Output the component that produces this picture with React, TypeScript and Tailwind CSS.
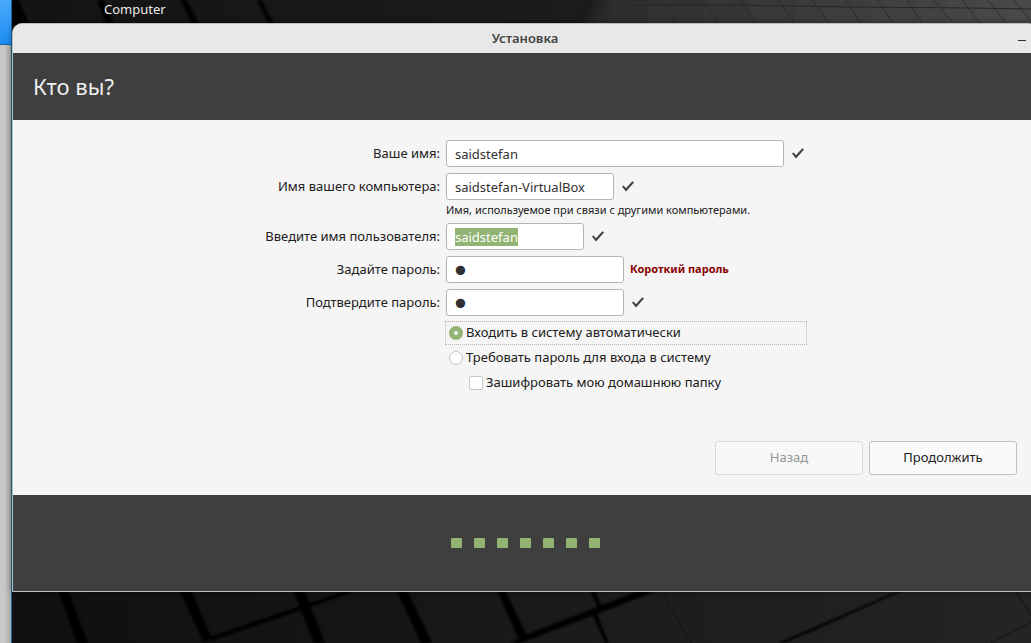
import { useEffect, useRef } from "react";
import type { ReactNode } from "react";

const STEPS = [1, 2, 3, 4, 5, 6, 7];

const BOX =
  "h-[27px] min-w-0 rounded-[3px] border border-[#b4b4b4] bg-white text-[#303030] outline-none selection:bg-[#92b372] selection:text-white";
const INPUT = `${BOX} px-2 text-[13px] leading-4`;
const PASSWORD = `${BOX} px-1 pt-0.5 font-['DejaVu_Sans',sans-serif] text-[32px] leading-6`;
const RADIO =
  "size-3.5 appearance-none rounded-full border border-[#c8c8c8] bg-white outline-none checked:border-[5px] checked:border-[#92b372]";

function Check() {
  return (
    <svg width="14" height="12" viewBox="0 0 14 12" className="shrink-0" role="img" aria-label="OK">
      <path d="M1 5.6 L2.6 4.4 L4.9 7.3 L11.4 0.2 L13 1.5 L5 10.5 Z" fill="#404040" />
    </svg>
  );
}

function Wallpaper() {
  return (
    <svg
      className="absolute inset-0 h-full w-full"
      viewBox="0 0 1031 643"
      preserveAspectRatio="xMidYMid slice"
      aria-hidden="true"
    >
      <defs>
        <linearGradient id="base" x1="0" y1="0" x2="1" y2="0">
          <stop offset="0" stopColor="#101010" />
          <stop offset="0.35" stopColor="#151515" />
          <stop offset="0.6" stopColor="#1c1c1c" />
          <stop offset="1" stopColor="#242424" />
        </linearGradient>
        <linearGradient id="upper" x1="0" y1="0" x2="1" y2="0">
          <stop offset="0" stopColor="#131313" />
          <stop offset="0.5" stopColor="#1b1b1b" />
          <stop offset="1" stopColor="#1f1f1f" />
        </linearGradient>
        <linearGradient id="glow" x1="0" y1="0" x2="1" y2="0">
          <stop offset="0" stopColor="#2a2a2a" />
          <stop offset="0.25" stopColor="#333333" />
          <stop offset="1" stopColor="#4b4b4b" />
        </linearGradient>
        <filter id="soft" x="-5%" y="-5%" width="110%" height="110%">
          <feGaussianBlur stdDeviation="0.8" />
        </filter>
        <filter id="haze" x="-5%" y="-100%" width="110%" height="300%">
          <feGaussianBlur stdDeviation="7" />
        </filter>
      </defs>
      <rect width="1031" height="643" fill="url(#base)" />
      <rect width="1031" height="40" fill="url(#upper)" />
      <polygon points="575,60 592,20 618,-30 1060,-30 1060,60" fill="url(#glow)" filter="url(#haze)" />
      <g fill="#060606" filter="url(#soft)">
        <polygon points="12,0 19,0 30,26 12,26" />
        <polygon points="97,0 104,0 115,26 107,26" />
        <polygon points="180,0 187,0 200,26 193,26" />
        <polygon points="257,0 261,0 275,26 270,26" />
        <polygon points="58,590 68,590 88,643 77,643" />
        <polygon points="179,590 191,590 211,637 204,643" />
        <polygon points="293,590 304,590 325,643 314,643" />
        <polygon points="396,590 407,590 432,643 421,643" />
        <polygon points="497,590 505,590 527,636 518,638" />
        <polygon points="590,590 594,590 602,606 598,608" />
        <polygon points="592,614 596,612 609,643 605,643" />
        <polygon points="206,641 212,636 306,604 345,591 356,591 308,608 214,640" />
        <polygon points="510,643 528,634 638,591 656,591 592,616 520,643" />
        <polygon points="778,643 815,627 900,590 904,590 815,630 784,643" />
      </g>
      <g stroke="#262626" strokeWidth="1" fill="none">
        <path d="M625 5 L730 5 L850 7 L970 8 L1031 9" />
        <path
          opacity="0.7"
          d="M662 0 L676 23 M703 0 L718 23 M741 0 L756 23 M778 0 L795 23 M812 0 L829 23 M845 0 L861 23 M877 0 L893 23 M907 0 L922 23 M934 0 L953 23 M962 0 L980 23 M988 0 L1006 23 M1014 0 L1031 21"
        />
      </g>
      <g stroke="#141414" strokeWidth="1" fill="none">
        <path d="M662 592 L691 643 M1016 592 L1031 615 M991 643 L1031 622" />
      </g>
    </svg>
  );
}

function Row({ id, label, children }: { id: string; label: string; children: ReactNode }) {
  return (
    <>
      <label htmlFor={id} className="text-right leading-[27px] whitespace-nowrap">
        {label}
      </label>
      <div className="min-w-0">{children}</div>
    </>
  );
}

export default function App() {
  const username = useRef<HTMLInputElement>(null);

  useEffect(() => {
    username.current?.focus();
    username.current?.select();
  }, []);

  return (
    <div className="relative flex min-h-screen overflow-hidden bg-[#101010] font-['Noto_Sans',sans-serif] text-[13px] text-[#202020]">
      <Wallpaper />
      <aside className="relative flex w-3 shrink-0 flex-col border-r border-[#1c6699] bg-linear-to-r from-[#c8c8c8] from-40% to-[#a8a8a8]">
        <div className="h-[45px] border-b border-[#0f63a8] bg-linear-to-b from-[#47a9fb] to-[#1a8cf0]" />
      </aside>
      <div className="relative min-w-0 flex-1">
        <div className="h-[23px] pl-[92px] leading-[19px] text-[#ececec]">Computer</div>
        <main className="-mr-[7px] overflow-hidden rounded-t-[10px] border border-[#bcbcbc] bg-[#f5f5f5] shadow-[0_0_6px_rgba(0,0,0,0.4)]">
          <div className="relative flex h-[29px] items-center justify-center bg-[#e8e8e8] font-semibold text-[#454545]">
            Установка
            <button type="button" aria-label="Свернуть" className="absolute right-[11px] flex h-5 w-2 items-center">
              <span className="mt-1 h-px w-2 bg-[#303030]" />
            </button>
          </div>
          <header className="bg-[#3f3f3f] px-5 py-4">
            <h1 className="text-[22px] leading-[35px] text-[#eeeeee]">Кто вы?</h1>
          </header>
          <form className="px-5 py-5" onSubmit={(e) => e.preventDefault()}>
            <div className="grid grid-cols-[407fr_571fr] gap-x-1.5 gap-y-1.5">
              <Row id="name" label="Ваше имя:">
                <div className="flex items-center gap-[7px]">
                  <input id="name" className={`${INPUT} w-[338px]`} defaultValue="saidstefan" />
                  <Check />
                </div>
              </Row>
              <Row id="host" label="Имя вашего компьютера:">
                <div className="flex items-center gap-[7px]">
                  <input id="host" className={`${INPUT} w-[168px]`} defaultValue="saidstefan-VirtualBox" />
                  <Check />
                </div>
                <p className="pt-[3px] pb-px text-[11px] leading-[13px]">
                  Имя, используемое при связи с другими компьютерами.
                </p>
              </Row>
              <Row id="user" label="Введите имя пользователя:">
                <div className="flex items-center gap-[7px]">
                  <input id="user" ref={username} className={`${INPUT} w-[138px]`} defaultValue="saidstefan" />
                  <Check />
                </div>
              </Row>
              <Row id="pass" label="Задайте пароль:">
                <div className="flex items-center gap-1.5">
                  <input id="pass" type="password" className={`${PASSWORD} w-[178px]`} defaultValue="1" />
                  <strong className="text-[11px] font-bold text-[#8b0000]">Короткий пароль</strong>
                </div>
              </Row>
              <Row id="confirm" label="Подтвердите пароль:">
                <div className="flex items-center gap-[7px]">
                  <input id="confirm" type="password" className={`${PASSWORD} w-[178px]`} defaultValue="1" />
                  <Check />
                </div>
              </Row>
              <div className="col-start-2 flex flex-col gap-[3px]">
                <label className="flex h-[22px] w-[360px] items-center gap-[3px] px-[3px] outline-1 outline-[#b4b4b4] outline-dotted">
                  <input type="radio" name="login" defaultChecked className={RADIO} />
                  Входить в систему автоматически
                </label>
                <label className="flex h-[22px] items-center gap-[3px] px-[3px]">
                  <input type="radio" name="login" className={RADIO} />
                  Требовать пароль для входа в систему
                </label>
                <label className="flex h-[22px] items-center gap-[3px] pl-[23px]">
                  <input
                    type="checkbox"
                    className="size-3.5 appearance-none rounded-[2px] border border-[#c8c8c8] bg-white checked:bg-[#92b372]"
                  />
                  Зашифровать мою домашнюю папку
                </label>
              </div>
            </div>
            <div className="mt-[47px] flex justify-end gap-1.5">
              <button
                type="button"
                disabled
                className="h-[34px] w-[148px] rounded-[3px] border border-[#d9d9d9] bg-[#f7f7f7] text-[#959595]"
              >
                Назад
              </button>
              <button type="submit" className="h-[34px] w-[148px] rounded-[3px] border border-[#c0c0c0] bg-[#fafafa]">
                Продолжить
              </button>
            </div>
          </form>
          <footer className="flex h-24 items-center justify-center gap-3 bg-[#3f3f3f]">
            {STEPS.map((step) => (
              <span key={step} className="h-2.5 w-[11px] rounded-[1px] bg-[#92b372]" />
            ))}
          </footer>
        </main>
      </div>
    </div>
  );
}
